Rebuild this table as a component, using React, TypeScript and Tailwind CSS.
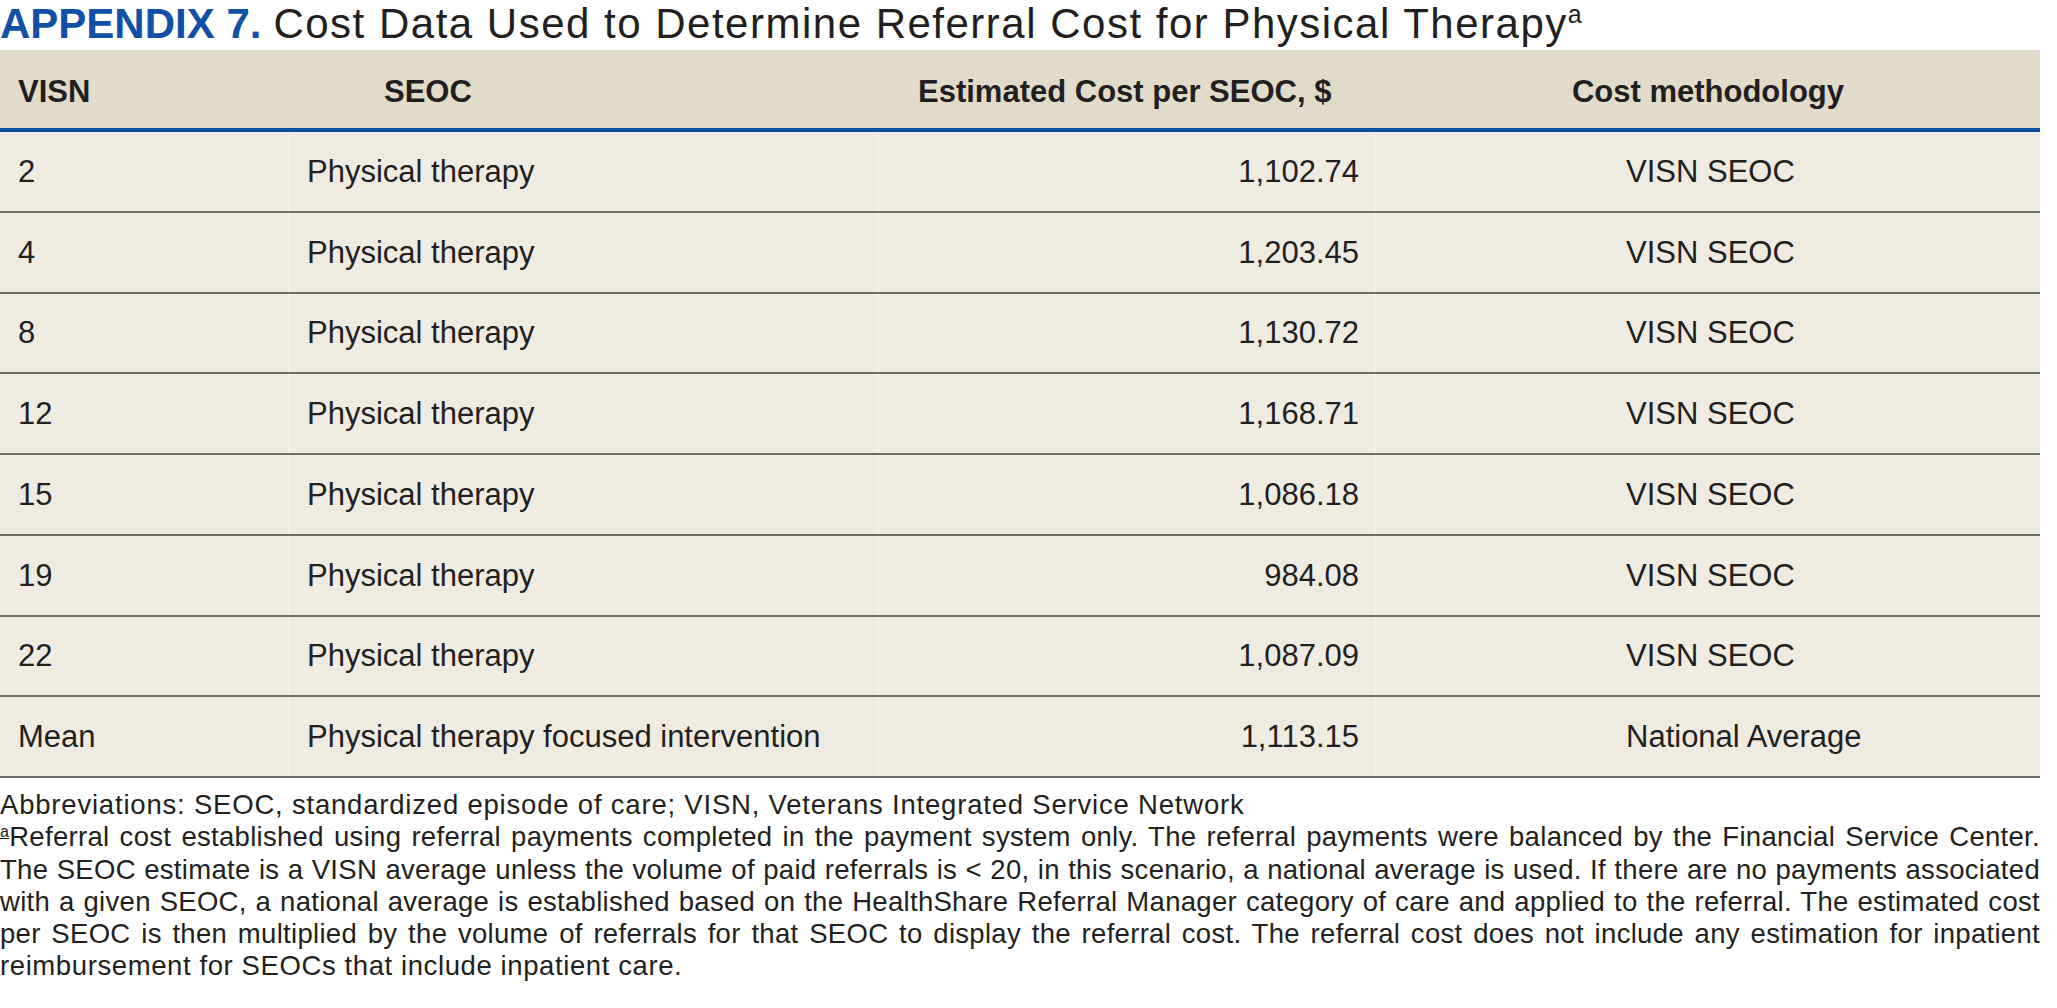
import React from "react";

const rows = [
  ["2", "Physical therapy", "1,102.74", "VISN SEOC"],
  ["4", "Physical therapy", "1,203.45", "VISN SEOC"],
  ["8", "Physical therapy", "1,130.72", "VISN SEOC"],
  ["12", "Physical therapy", "1,168.71", "VISN SEOC"],
  ["15", "Physical therapy", "1,086.18", "VISN SEOC"],
  ["19", "Physical therapy", "984.08", "VISN SEOC"],
  ["22", "Physical therapy", "1,087.09", "VISN SEOC"],
  ["Mean", "Physical therapy focused intervention", "1,113.15", "National Average"],
];

const noteLines = [
  "The SEOC estimate is a VISN average unless the volume of paid referrals is < 20, in this scenario, a national average is used. If there are no payments associated",
  "with a given SEOC, a national average is established based on the HealthShare Referral Manager category of care and applied to the referral. The estimated cost",
  "per SEOC is then multiplied by the volume of referrals for that SEOC to display the referral cost. The referral cost does not include any estimation for inpatient",
];

export default function App() {
  return (
    <div className="w-[2057px] h-[1008px] bg-white text-[#231f20] font-['Liberation_Sans',Arial,sans-serif] overflow-hidden">
      <div className="w-[2040px]">
        <div className="h-[47px] leading-[47px] whitespace-nowrap">
          <span className="font-bold text-[42px] text-[#1150a6]">APPENDIX 7.</span>
          <span className="font-normal text-[42px] tracking-[1.5px] ml-[12px]">Cost Data Used to Determine Referral Cost for Physical Therapy</span>
          <span className="text-[25px] leading-[0] relative -top-[15px]">a</span>
        </div>

        <div className="mt-[3px]">
          <div className="grid grid-cols-[289px_590px_497px_664px] bg-[#e2dbc9] h-[82px] pt-[4px] items-center text-[31px] leading-[31px] font-bold border-b-[4px] border-[#0b4fa3]">
            <div className="pl-[18px]">VISN</div>
            <div className="pl-[95px]">SEOC</div>
            <div className="pl-[39px]">Estimated Cost per SEOC, $</div>
            <div className="text-center">Cost methodology</div>
          </div>
          {rows.map((r, i) => (
            <div
              key={i}
              className="grid grid-cols-[289px_590px_497px_664px] bg-[#efebe1] h-[80.75px] items-center text-[31px] leading-[31px] border-b-[2px] border-[#6f6d69]"
            >
              <div className="pl-[18px] h-full flex items-center border-r border-[#f6f3ec]">{r[0]}</div>
              <div className="pl-[18px] h-full flex items-center border-r border-[#f6f3ec]">{r[1]}</div>
              <div className="pr-[16px] h-full flex items-center justify-end border-r border-[#f6f3ec]">{r[2]}</div>
              <div className="pl-[250px]">{r[3]}</div>
            </div>
          ))}
        </div>

        <div className="mt-[11px] text-[27.5px] leading-[32.3px]">
          <div className="h-[32.3px] whitespace-nowrap tracking-[0.8px]">
            Abbreviations: SEOC, standardized episode of care; VISN, Veterans Integrated Service Network
          </div>
          <div className="h-[32.3px] whitespace-nowrap text-justify [text-align-last:justify] tracking-[0.3px]">
            <span className="text-[16px] leading-[0] relative -top-[9px] underline">a</span>Referral cost established using referral payments completed in the payment system only. The referral payments were balanced by the Financial Service Center.
          </div>
          {noteLines.map((l, i) => (
            <div key={i} className="h-[32.3px] whitespace-nowrap text-justify [text-align-last:justify] tracking-[0.3px]">
              {l}
            </div>
          ))}
          <div className="h-[32.3px] whitespace-nowrap tracking-[0.6px]">reimbursement for SEOCs that include inpatient care.</div>
        </div>
      </div>
    </div>
  );
}
